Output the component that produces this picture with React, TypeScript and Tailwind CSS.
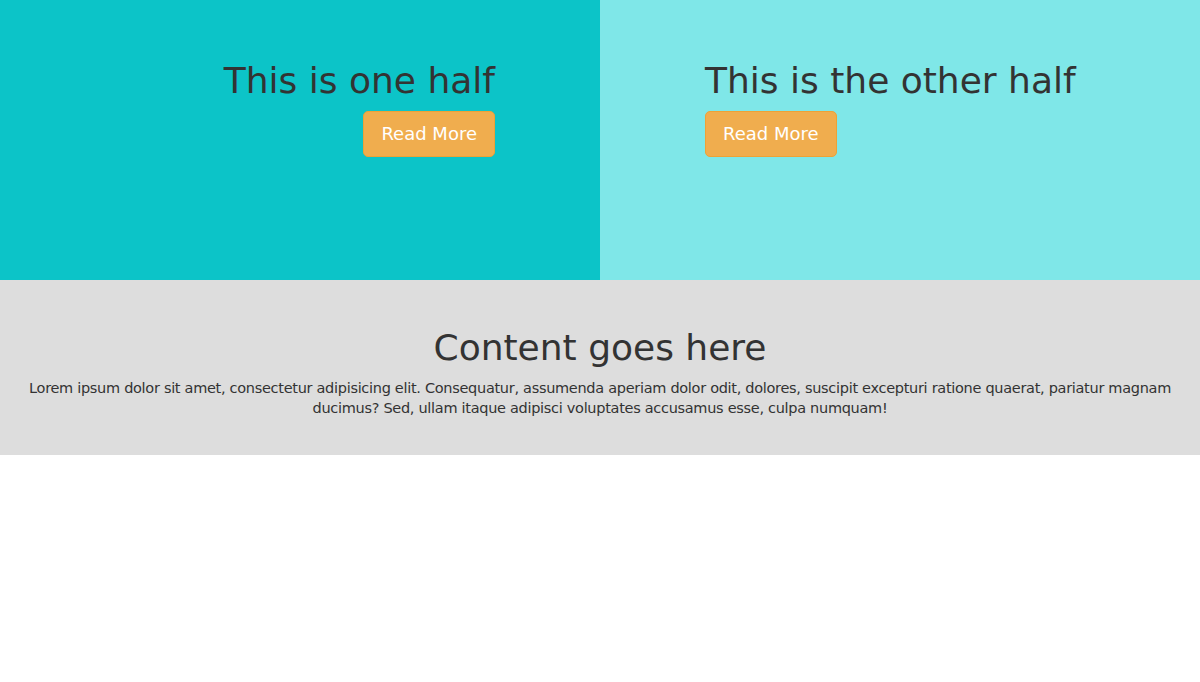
export default function App() {
  const font = { fontFamily: '"DejaVu Sans", "Open Sans", sans-serif' }

  return (
    <div className="min-h-[682px] bg-white text-[#333]" style={font}>
      <div className="flex h-[280px]">
        <div className="w-1/2 bg-[#0cc4c8] pt-[61px] pr-[105px] flex flex-col items-end">
          <h1 className="text-[36px] leading-[1.1] font-normal">This is one half</h1>
          <button className="mt-[10px] h-[46px] px-[17px] rounded-[5px] bg-[#f0ad4e] border border-[#eea236] text-white text-[18px]">
            Read More
          </button>
        </div>
        <div className="w-1/2 bg-[#7fe7e8] pt-[61px] pl-[105px] flex flex-col items-start">
          <h1 className="text-[36px] leading-[1.1] font-normal">This is the other half</h1>
          <button className="mt-[10px] h-[46px] px-[17px] rounded-[5px] bg-[#f0ad4e] border border-[#eea236] text-white text-[18px]">
            Read More
          </button>
        </div>
      </div>

      <div className="bg-[#dddddd] h-[175px] pt-[48px] px-[18px] text-center">
        <h2 className="text-[36px] leading-[1.1]">Content goes here</h2>
        <p className="mt-[10px] text-[14.5px] leading-[20px] tracking-[-0.3px]">
          Lorem ipsum dolor sit amet, consectetur adipisicing elit. Consequatur, assumenda aperiam dolor odit, dolores, suscipit excepturi ratione quaerat, pariatur magnam ducimus? Sed, ullam itaque adipisci voluptates accusamus esse, culpa numquam!
        </p>
      </div>
    </div>
  )
}
